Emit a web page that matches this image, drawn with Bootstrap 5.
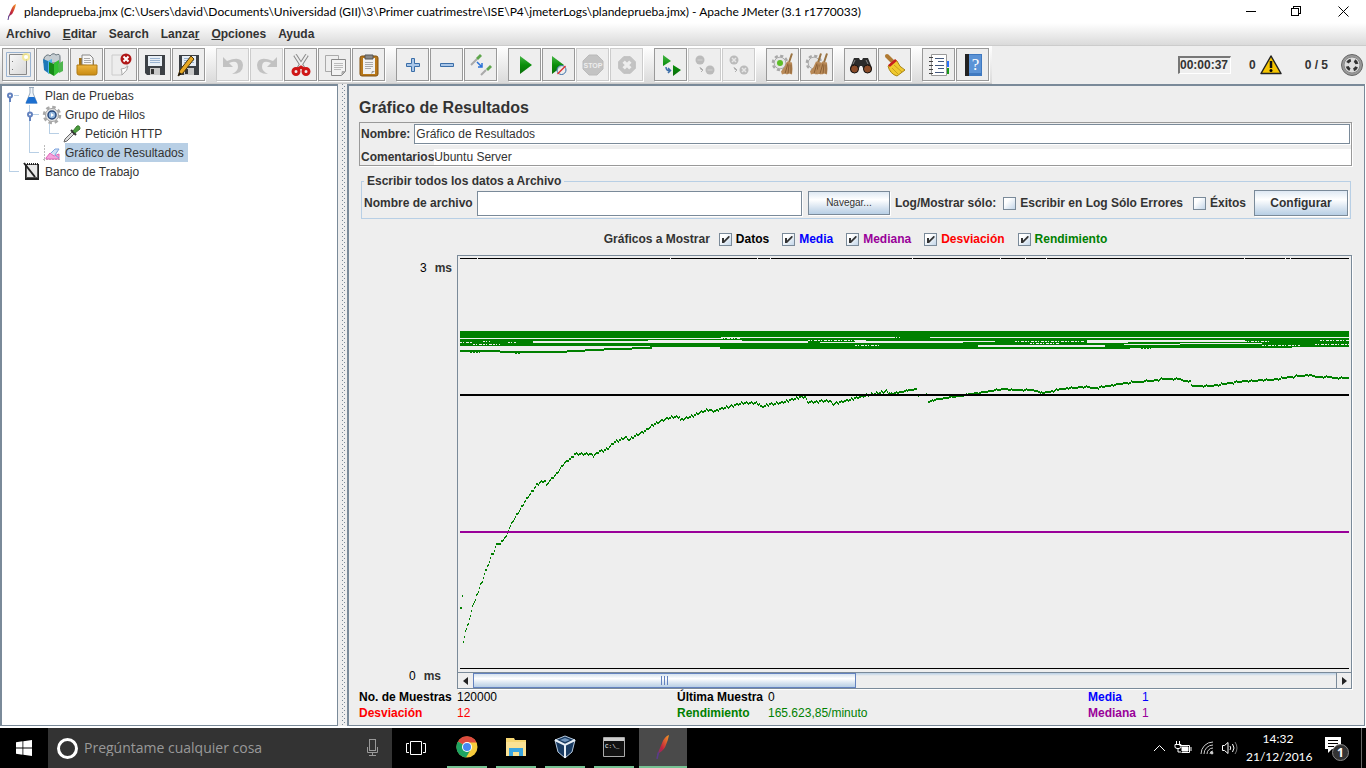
<!DOCTYPE html>
<html lang="es">
<head>
<meta charset="utf-8">
<meta name="viewport" content="width=device-width, initial-scale=1">
<title>plandeprueba.jmx - Apache JMeter (3.1 r1770033)</title>
<link href="https://cdn.jsdelivr.net/npm/bootstrap@5.3.0/dist/css/bootstrap.min.css" rel="stylesheet">
<style>
:root{--steel:#7a8a99;--sky:#b8cfe5;--panel:#eee;--ink:#333}
body{font:12px/16px "Liberation Sans",Arial,sans-serif;color:var(--ink);background:#fff}
button{font:inherit;color:inherit;border:0;background:none;padding:0}
svg{display:block;flex:none}
a{color:inherit;text-decoration:none}
b,label,legend{font-weight:700}
main{padding:0 1px 2px 0}

/* Title bar, menus and toolbar */
.titlebar{height:23px;font-family:Lato,"Noto Sans",sans-serif;font-size:12px;color:#000}
.titlebar button{width:46px;height:23px}
.menus{height:23px;background:linear-gradient(#fff,#dadada);border-bottom:1px solid #ccc;font-weight:700;padding:0 6px;gap:12px}
.toolrow{height:38px;background:var(--panel)}
.toolset{width:992px;height:38px;padding:0 2px;gap:10px;background:linear-gradient(#fff,#dadada);border-bottom:1px solid #ccc}
.tool{width:33px;height:33px;border:1px solid #999;background:var(--panel);margin-right:1px;box-shadow:1px 1px #fff}
.tool:disabled{border-color:#ccc}
.tool:disabled svg{opacity:.75}
.runinfo{padding-right:2px}
.clockbox{width:53px;height:18px;border:1px solid #fff;border-top:2px solid #777;border-left:2px solid #777;line-height:15px;margin-right:18px}
.threads{margin:0 12px 0 23px}

/* Test plan tree */
.treepane{width:338px;background:#fff;border:2px solid var(--steel);border-right:1px solid var(--steel);border-bottom:1px solid var(--steel)}
.grip{width:9px;background:url("data:image/svg+xml,%3Csvg xmlns='http://www.w3.org/2000/svg' width='4' height='4' fill='%237a8a99'%3E%3Cpath d='M0 0h1v1H0zM2 2h1v1H2z'/%3E%3C/svg%3E") 4px 0 repeat-y var(--panel)}
.tree,.tree ul{list-style:none;margin:0;padding:0}
.tree .node{height:19px;gap:3px}
.tree .txt{height:19px;line-height:20px}
.tree .picked{background:var(--sky);padding-right:4px}
.lv0{padding-left:20px}
.lv1{padding-left:40px}
.lv2{padding-left:61px}

/* Result panel */
.workpane{border:2px solid var(--steel);border-right:1px solid var(--steel);border-bottom:1px solid var(--steel);background:var(--panel);padding:0 12px 4px 10px;min-width:0}
.workpane h1{font-size:16px;line-height:20px;font-weight:700;margin:12px 0 4px}
.namebox{border:1px solid #999;box-shadow:1px 1px #fff;padding-top:1px}
.namebox label{padding-left:1px}
.swing-in{border:1px solid var(--steel);background:#fff;border-radius:0;font-size:12px;color:var(--ink);padding:0 1px;box-shadow:1px 1px #fff;min-width:0;outline:0}
.plain-in{border:0;box-shadow:none;padding:0;height:16px}
.nmfield{height:20px;margin:0 1px 0 4px}
.cmrow{margin-top:5px}
.filefs{border:1px solid var(--sky);margin:7px 1px 0 2px;padding:0 2px 1px}
.filefs legend{float:none;width:auto;font-size:12px;line-height:16px;padding:0 3px;margin:0}
.filerow{height:28px}
.fnfield{height:25px;margin:0 6px 0 4px}
.steelbtn{border:1px solid var(--steel);background:linear-gradient(#dfe9f3,#fff 35%,#d2e0ee 75%,var(--sky));box-shadow:1px 1px #fff}
.nav-btn{width:82px;height:24px;font-size:10px}
.logtxt{margin:0 7px 0 5px}
.errtxt{margin-right:10px}
.cfg-btn{width:94px;height:26px;margin-left:8px}
.tick{appearance:none;width:13px;height:13px;margin:0 4px 0 0;border:1px solid var(--steel);background:linear-gradient(135deg,#fff 30%,#c3d6e9);flex:none}
.tick:checked{background:url("data:image/svg+xml,%3Csvg xmlns='http://www.w3.org/2000/svg' viewBox='0 0 11 11'%3E%3Cpath d='M2 4h2v2.5L8.500 2h1v1.500L4 9H2z' fill='%23333'/%3E%3C/svg%3E"),linear-gradient(135deg,#fff 30%,#c3d6e9)}
.showrow{gap:13px;height:16px;margin:12px 0 8px}
.showrow>b{margin-right:-4px}
.axis{width:98px}
.axtop{padding:5px 5px 0 0}
.axbot{padding:0 16px 5px 0}
.plotbox{border:1px solid var(--steel);box-shadow:1px 1px #fff;min-width:0}
.plotarea{padding:2px;border-bottom:1px solid var(--steel)}
.hbar{height:15px;background:linear-gradient(var(--sky),var(--panel) 3px)}
.hbar button{width:15px;background:var(--panel)}
.hbar .hright{border-left:1px solid var(--steel)}
.thumb{width:383px;border:1px solid #6382bf;background:linear-gradient(#d5e2ef,#fff 35%,#d2e0ee 75%,var(--sky))}
.stats{display:grid;grid-template-columns:98px 22fr 91px 32fr 54px 21fr}
.kblack{color:#000}.kblue{color:#00f}.kpurple{color:#909}.kred{color:#f00}.kgreen{color:green}

/* Taskbar */
.tasks{height:40px;background:#000;color:#fff;font-family:"Open Sans","Noto Sans",sans-serif}
.tasks button{height:40px}
.sq{width:48px}
.ask{width:344px;background:#333;padding:0 12px 0 8px}
.ask input{background:none;border:0;outline:0;color:#fff;font-size:14px;padding:0 0 0 5px;min-width:0}
.ask input::placeholder{color:#999;opacity:1}
.apps{padding-left:7px;gap:9px}
.tasks .app{width:40px;border-bottom:2px solid #76c293}
.tasks .now{width:48px;background:#4a4a4a;margin-left:-4px}
.when{width:64px;line-height:18px;font-family:Lato,"Noto Sans",sans-serif}
.note{margin:0 4px 0 5px}
.edge{width:5px;height:40px;border-left:1px solid #666}
</style>
</head>
<body class="d-flex flex-column min-vh-100">
<svg width="0" height="0" class="position-absolute" aria-hidden="true">
<defs>
<linearGradient id="gFeather" x1="0" y1="1" x2="1" y2="0"><stop offset="0" stop-color="#5b3b8c"/><stop offset=".4" stop-color="#c2233c"/><stop offset="1" stop-color="#f69923"/></linearGradient>
<linearGradient id="gGreen" x2="0" y2="1"><stop offset="0" stop-color="#45b545"/><stop offset=".5" stop-color="#0a8f0a"/><stop offset="1" stop-color="#0a6c0a"/></linearGradient>
<linearGradient id="gPaper" x1="0" y1="0" x2="1" y2="1"><stop offset="0" stop-color="#f8f8f8"/><stop offset="1" stop-color="#d8d8d8"/></linearGradient>
<linearGradient id="gGold" x2="0" y2="1"><stop offset="0" stop-color="#efb63e"/><stop offset="1" stop-color="#c88a12"/></linearGradient>
<symbol id="feather" viewBox="0 0 16 16"><path d="M12 0Q9 1 7.500 5L5 11 4 14 5.500 12Q9 10 10 6.500 11.500 3 12 0z" fill="url(#gFeather)"/><path d="M5 11.500 4 16" stroke="#5b3b8c"/></symbol>
<symbol id="gear" viewBox="0 0 20 20"><circle cx="10" cy="10" r="8" fill="none" stroke="#a8a8a8" stroke-width="2.500" stroke-dasharray="3.500 2.780"/><circle cx="10" cy="10" r="6.500" fill="#e6e6e6" stroke="#a0a0a0"/></symbol>
<symbol id="broom" viewBox="0 0 14 22"><path d="M12 0 9 9" stroke="#9a7443" stroke-width="2"/><path d="M7 8l5 1q1 7 0 12l-3-1-2 1-2-1-3 1-1-3q4-4 6-10z" fill="#b98a58"/><path d="M8 10 5 20M9 11 8 20M11 11v9" stroke="#8b6035"/></symbol>
<symbol id="stopsign" viewBox="0 0 24 24"><path d="M8 2h8l6 6v8l-6 6H8l-6-6V8z" fill="#b5b5b5" stroke="#aaa"/></symbol>
<symbol id="dropper" viewBox="0 0 18 18"><path d="M1 17 2 14 9 7l2 2-7 7z" fill="#ddd" stroke="#666"/><path d="M8 5l5 5" stroke="#333" stroke-width="2"/><path d="M10 6 14 1q3-1 3 3l-5 4z" fill="#4a9c3c" stroke="#3c7a33"/></symbol>
<symbol id="floppy" viewBox="0 0 24 24"><path d="M2 2h20v20H4l-2-2z" fill="#3c4045"/><path d="M5 3h14v10H5z" fill="#e7eef5"/><path d="M7 5.500h10M7 7.500h10M7 9.500h10" stroke="#9ab3d0"/><path d="M7 15h10v7H7z" fill="#c9c9c9"/><path d="M8 16h3v5H8z" fill="#333"/></symbol>
</defs>
</svg>

<header>
<div class="titlebar d-flex align-items-center">
  <svg width="16" height="18" viewBox="0 0 16 16" class="mx-1"><use href="#feather"/></svg>
  <span class="flex-grow-1 text-nowrap">plandeprueba.jmx (C:\Users\david\Documents\Universidad (GII)\3\Primer cuatrimestre\ISE\P4\jmeterLogs\plandeprueba.jmx) - Apache JMeter (3.1 r1770033)</span>
  <button aria-label="Minimizar"><svg class="m-auto" width="11" height="11" stroke="#000" shape-rendering="crispEdges"><path d="M0 5.500h10"/></svg></button>
  <button aria-label="Restaurar"><svg class="m-auto" width="12" height="11" stroke="#000" fill="none" shape-rendering="crispEdges"><path d="M.5 2.500h7v7h-7zM2.500 2.500v-2h7v7h-2"/></svg></button>
  <button aria-label="Cerrar"><svg class="m-auto" width="11" height="11" stroke="#000"><path d="M.5.5l10 10M10.500.5l-10 10"/></svg></button>
</div>
<nav class="menus d-flex align-items-center">
  <a href="#">Archivo</a><a href="#"><u>E</u>ditar</a><a href="#">Search</a><a href="#">Lanza<u>r</u></a><a href="#"><u>O</u>pciones</a><a href="#">Ayuda</a>
</nav>
<div class="toolrow d-flex">
 <div class="toolset d-flex align-items-center flex-shrink-0">
  <div class="d-flex">
   <button class="tool d-grid" aria-label="Nuevo"><svg class="m-auto" width="25" height="25" viewBox="0 0 25 25"><path d="M.5.5h24v24H.5z" fill="none" stroke="#9ab3d0"/><path d="M3.500 2.500h17v20h-17z" fill="url(#gPaper)" stroke="#888"/><circle cx="20" cy="5" r="4" fill="#f5e98a" opacity=".8"/><circle cx="20" cy="5" r="2" fill="#fff"/><path d="M6 9.500h1M6 17.500h1" stroke="#777"/></svg></button>
   <button class="tool d-grid" aria-label="Plantillas"><svg class="m-auto" width="24" height="24" viewBox="0 0 24 24"><path d="M3 5q3-5 6-2 3-4 6-1 4-2 4 2v6H3z" fill="#c5cdd2" stroke="#68757e"/><path d="M2 6 7 8V20L3 17z" fill="#1d78b8"/><path d="M7 8 11 6v14l-4 1z" fill="#52b4e6"/><path d="M8 9l5 2v12l-5-3z" fill="#178a17"/><path d="M13 10l5-3v12l-5 4z" fill="#35c035"/><path d="M17 11l5-3v10l-4 2z" fill="#4fb64f"/></svg></button>
   <button class="tool d-grid" aria-label="Abrir"><svg class="m-auto" width="24" height="24" viewBox="0 0 24 24"><path d="M4 10V5h7l1 2h7v7H4z" fill="#a47316"/><path d="M7 12V2h8l3 3v8z" fill="#f7f7f7" stroke="#888"/><path d="M9 5.500h6M9 7.500h7M9 9.500h7" stroke="#aaa"/><path d="M2 12h20v8q0 2-2 2H4q-2 0-2-2z" fill="url(#gGold)" stroke="#b07a12"/></svg></button>
   <button class="tool d-grid" aria-label="Cerrar plan"><svg class="m-auto" width="24" height="24" viewBox="0 0 24 24"><path d="M3 2h15v15l-5 5H3z" fill="#ededed" stroke="#ccc"/><path d="M19 13q0 4-6 9 0-5-1-6 4 0 7-3z" fill="#fff" stroke="#aaa"/><circle cx="17" cy="6" r="5.500" fill="#b01818"/><path d="m14.500 3.500 5 5m0-5-5 5" stroke="#fff" stroke-width="2"/></svg></button>
   <button class="tool d-grid" aria-label="Guardar"><svg class="m-auto" width="24" height="24"><use href="#floppy"/></svg></button>
   <button class="tool d-grid" aria-label="Guardar como"><svg class="m-auto" width="24" height="24" viewBox="0 0 24 24"><use href="#floppy"/><path d="m1 23 2-6L14 3l3 3L6 20z" fill="#e8a823" stroke="#4d360b"/><path d="m1 23 1.500-4 2 2z" fill="#111"/></svg></button>
  </div>
  <div class="d-flex">
   <button class="tool d-grid" disabled aria-label="Deshacer"><svg class="m-auto" width="24" height="24" viewBox="0 0 24 24"><path d="M2 4v10h10L8 10q9-4 9 4 0 4-6 7 11 0 11-9Q21 2 6 8z" fill="#b4b4b4"/></svg></button>
   <button class="tool d-grid" disabled aria-label="Rehacer"><svg class="m-auto" width="24" height="24" viewBox="0 0 24 24"><path d="M22 4v10H12l4-4q-9-4-9 4 0 4 6 7-11 0-11-9Q3 2 18 8z" fill="#b4b4b4"/></svg></button>
   <button class="tool d-grid" aria-label="Cortar"><svg class="m-auto" width="24" height="24" viewBox="0 0 24 24"><path d="M6 2 15 16M18 2 9 16" stroke="#888" stroke-width="4"/><path d="M6 2 15 16M18 2 9 16" stroke="#eee" stroke-width="2"/><g fill="none" stroke="#cf1717" stroke-width="3"><circle cx="7" cy="18.500" r="3"/><circle cx="17" cy="18.500" r="3"/><path d="m9 16 3-2 3 2"/></g></svg></button>
   <button class="tool d-grid" aria-label="Copiar"><svg class="m-auto" width="24" height="24" viewBox="0 0 24 24"><path d="M2.500 2.500h13v16h-13z" fill="#eee" stroke="#aaa"/><path d="M8.500 6.500h14v12l-4 4h-10z" fill="#f3f3f3" stroke="#888"/><path d="M11 10.500h9M11 12.500h9M11 14.500h9M11 16.500h7" stroke="#bbb"/><path d="m18 22 1-4 4 0z" fill="#aaa"/></svg></button>
   <button class="tool d-grid" aria-label="Pegar"><svg class="m-auto" width="24" height="24" viewBox="0 0 24 24"><rect x="3" y="3" width="18" height="20" rx="2" fill="#b87718" stroke="#805010"/><path d="M6 5h12v16H6z" fill="#f1f1f1"/><path d="M8 2h8v4H8z" fill="#888" stroke="#555"/><path d="M8 9.500h8M8 11.500h8M8 13.500h8M8 15.500h6" stroke="#aaa"/><path d="m14 21 1-3 3 0z" fill="#999"/></svg></button>
  </div>
  <div class="d-flex">
   <button class="tool d-grid" aria-label="Expandir"><svg class="m-auto" width="24" height="24" viewBox="0 0 24 24"><path d="M10.500 5.500h3v5h5v3h-5v5h-3v-5h-5v-3h5z" fill="#a9c6e8" stroke="#3b6ea8"/></svg></button>
   <button class="tool d-grid" aria-label="Contraer"><svg class="m-auto" width="24" height="24" viewBox="0 0 24 24"><path d="M5.500 10.500h13v3h-13z" fill="#a9c6e8" stroke="#3b6ea8"/></svg></button>
   <button class="tool d-grid" aria-label="Alternar"><svg class="m-auto" width="24" height="24" viewBox="0 0 24 24"><g stroke="#aaa" stroke-width="2"><path d="m2 12 6-6M12 22l5-5"/></g><path d="m7 5 4-4 2 2-4 4zM17 16l4-4 2 2-4 4z" fill="#5ea64c"/><path d="m8 9 5 5m0-4v4H9" fill="none" stroke="#2a72d8" stroke-width="1.500"/></svg></button>
  </div>
  <div class="d-flex">
   <button class="tool d-grid" aria-label="Arrancar"><svg class="m-auto" width="24" height="24" viewBox="0 0 24 24"><path d="m7 3 12 9-12 9z" fill="url(#gGreen)"/></svg></button>
   <button class="tool d-grid" aria-label="Arrancar sin pausas"><svg class="m-auto" width="24" height="24" viewBox="0 0 24 24"><path d="m5 3 12 9-12 9z" fill="url(#gGreen)"/><circle cx="14.500" cy="17" r="4.500" fill="#eee" fill-opacity=".8" stroke="#3b6ea8"/><path d="m10.500 21 8-8" stroke="#d33" stroke-width="1.500"/></svg></button>
   <button class="tool d-grid" disabled aria-label="Parar"><svg class="m-auto" width="24" height="24" viewBox="0 0 24 24"><use href="#stopsign"/><text x="12" y="15" font-size="7" font-weight="700" text-anchor="middle" fill="#eee">STOP</text></svg></button>
   <button class="tool d-grid" disabled aria-label="Interrumpir"><svg class="m-auto" width="20" height="20" viewBox="0 0 24 24"><use href="#stopsign"/><path d="m8 8 8 8m0-8-8 8" stroke="#eee" stroke-width="4"/></svg></button>
  </div>
  <div class="d-flex">
   <button class="tool d-grid" aria-label="Arrancar remoto"><svg class="m-auto" width="24" height="24" viewBox="0 0 24 24"><path d="m4 2 8 6-8 5zM14 12l8 5-8 6z" fill="url(#gGreen)"/><path d="M7 14q0 4 4 3.500m-2-2.500 2.500 2.500-2.500 2.500" fill="none" stroke="#3b6ea8" stroke-width="1.500"/></svg></button>
   <button class="tool d-grid" disabled aria-label="Parar remoto"><svg class="m-auto" width="24" height="24" viewBox="0 0 24 24" fill="#aaa"><circle cx="7" cy="7" r="4.500"/><circle cx="17" cy="17" r="4.500"/><path d="M7 14q0 3 3 3m-2-2 2 2-2 2" fill="none" stroke="#999"/><path d="M4.500 6.500h5v1h-5zM14.500 16.500h5v1h-5z" fill="#ccc"/></svg></button>
   <button class="tool d-grid" disabled aria-label="Interrumpir remoto"><svg class="m-auto" width="24" height="24" viewBox="0 0 24 24" fill="#aaa"><circle cx="7" cy="7" r="4.500"/><circle cx="17" cy="17" r="4.500"/><path d="M7 14q0 3 3 3m-2-2 2 2-2 2" fill="none" stroke="#999"/><path d="m5 5 4 4m0-4-4 4M15 15l4 4m0-4-4 4" stroke="#e4e4e4" stroke-width="1.500"/></svg></button>
  </div>
  <div class="d-flex">
   <button class="tool d-grid" aria-label="Limpiar"><svg class="m-auto" width="24" height="24" viewBox="0 0 24 24"><use href="#gear" width="18" height="18" y="1"/><circle cx="9" cy="10" r="3" fill="#5ebd28"/><use href="#broom" x="9" width="14" height="23"/></svg></button>
   <button class="tool d-grid" aria-label="Limpiar todo"><svg class="m-auto" width="24" height="24" viewBox="0 0 24 24"><use href="#gear" width="18" height="18" y="1"/><use href="#broom" x="4" width="14" height="23"/><use href="#broom" x="10" width="14" height="23"/></svg></button>
  </div>
  <div class="d-flex">
   <button class="tool d-grid" aria-label="Buscar"><svg class="m-auto" width="24" height="24" viewBox="0 0 24 24"><path d="M5 5h5l1 2h2l1-2h5l4 10-1 4h-6l-3-6h-2l-3 6H2l-1-4z" fill="#2b2b2b"/><circle cx="5.500" cy="16" r="4" fill="#8a4b28" stroke="#111"/><circle cx="18.500" cy="16" r="4" fill="#8a4b28" stroke="#111"/><path d="M6 7 4 11M17 7l2 4" stroke="#888"/></svg></button>
   <button class="tool d-grid" aria-label="Limpiar búsqueda"><svg class="m-auto" width="24" height="24" viewBox="0 0 24 24"><path d="m4 3 5 5" stroke="#b07a32" stroke-width="4" stroke-linecap="round"/><path d="m5 13 7-6 2 1q2 6 8 9l-8 6Q7 21 5 13z" fill="#f0c92e" stroke="#a98412"/><path d="m6 13 7-6" stroke="#c81e1e" stroke-width="2.500"/><path d="m9 15 6 6m-4-9 8 7" stroke="#c9a11c"/></svg></button>
  </div>
  <div class="d-flex">
   <button class="tool d-grid" aria-label="Funciones"><svg class="m-auto" width="24" height="24" viewBox="0 0 24 24"><path d="M4.500 1.500h15v21h-15z" fill="#fff" stroke="#999"/><path d="M20 8h2v6h-2z" fill="#2a72ff"/><path d="M20 15h2v6h-2z" fill="#1a9a1a"/><path d="M2 4.500h4M2 8.500h4M2 12.500h4M2 16.500h4M2 20.500h4" stroke="#444"/><path d="M8 5.500h9M11 8.500h6M8 12.500h9M11 15.500h6M8 19.500h9" stroke="#445a80"/></svg></button>
   <button class="tool d-grid" aria-label="Ayuda"><svg class="m-auto" width="24" height="24" viewBox="0 0 24 24"><path d="M4 1h17v22H4z" fill="#3f79c0"/><path d="M4 1h4v22H4z" fill="#222"/><path d="M8 2h12v18H8z" fill="#5b93d6"/><text x="14.500" y="17" font-size="17" text-anchor="middle" fill="#fff" font-family="Liberation Serif">?</text></svg></button>
  </div>
 </div>
 <div class="runinfo d-flex align-items-center ms-auto fw-bold text-nowrap">
  <span class="clockbox">00:00:37</span><span class="me-1">0</span>
  <svg width="22" height="20" viewBox="0 0 22 20"><path d="M11 1 21 18.500H1z" fill="#f5c400" stroke="#222" stroke-width="1.500" stroke-linejoin="round"/><path d="M11 6v7" stroke="#111" stroke-width="2.500"/><circle cx="11" cy="15.500" r="1.500"/></svg>
  <span class="threads">0 / 5</span>
  <svg width="24" height="24" viewBox="0 0 24 24"><circle cx="12" cy="12" r="10.500" fill="#999" stroke="#666"/><circle cx="12" cy="12" r="8" fill="#ddd" stroke="#888"/><circle cx="12" cy="12" r="5" fill="none" stroke="#333" stroke-width="3" stroke-dasharray="4 3.850" stroke-dashoffset="-2"/></svg>
 </div>
</div>
</header>

<main class="d-flex flex-grow-1">
 <aside class="treepane flex-shrink-0 position-relative">
  <svg class="position-absolute top-0 start-0" width="60" height="100" stroke="#b8cfe5" fill="none" shape-rendering="crispEdges"><path d="M7.500 14v71.500h9M12 9.500h5M27.500 19v9M27.500 33v33.500h9M31 28.500h6M47.500 38v9.500h9"/><g stroke="#6382bf" stroke-width="2" shape-rendering="auto"><circle cx="8" cy="9.500" r="2" fill="#fff"/><path d="M8 12v4"/><circle cx="28" cy="28.500" r="2" fill="#fff"/><path d="M28 31v4"/></g></svg>
  <ul class="tree position-relative">
   <li><div class="node lv0 d-flex align-items-center"><svg width="20" height="19" viewBox="0 0 20 19"><path d="M7 1.500h5M8 2v5L4 17h11l-4-10V2" fill="#eef4fa" stroke="#9ab"/><path d="m6.500 11-3 6.500h12l-3-6.500z" fill="#1c6fd0"/></svg><span class="txt">Plan de Pruebas</span></div>
    <ul>
     <li><div class="node lv1 d-flex align-items-center"><svg width="20" height="20" viewBox="0 0 20 20"><use href="#gear"/><circle cx="10" cy="10" r="4" fill="#8fb4dd" stroke="#25467a" stroke-width="1.500"/><path d="m9 8 3 2-3 2z" fill="#fff"/></svg><span class="txt">Grupo de Hilos</span></div>
      <ul><li><div class="node lv2 d-flex align-items-center"><svg width="19" height="18"><use href="#dropper" width="18" height="18"/></svg><span class="txt">Petición HTTP</span></div></li></ul>
     </li>
     <li><div class="node lv1 d-flex align-items-center"><svg width="20" height="18" viewBox="0 0 20 18"><path d="M2.500 1v16M1 15.500h17" stroke="#bbb" stroke-dasharray="2 1"/><path d="m4 14 4-5 4 3 5-2v5H4z" fill="#f5a3dc" stroke="#df63b8"/><path d="m9 9 4-4h4l-4 6 4 3" fill="#cfe0f5" stroke="#7ea3dd"/></svg><span class="txt picked">Gráfico de Resultados</span></div></li>
    </ul>
   </li>
   <li><div class="node lv0 d-flex align-items-center"><svg width="20" height="19" viewBox="0 0 20 19"><path d="M3 2h14v16H3z" fill="#222"/><path d="M4.500 2.500h11v13h-11z" fill="#e9e9e9" stroke="#555"/><path d="m2 1 11 14" stroke="#222" stroke-width="2"/><path d="M5 2h11" stroke="#222" stroke-width="2" stroke-dasharray="1 1"/></svg><span class="txt">Banco de Trabajo</span></div></li>
  </ul>
 </aside>
 <div class="grip flex-shrink-0"></div>
 <section class="workpane flex-grow-1 d-flex flex-column">
  <h1>Gráfico de Resultados</h1>
  <div class="namebox">
   <div class="d-flex align-items-center"><label for="nm">Nombre:</label><input id="nm" class="swing-in flex-grow-1 nmfield" value="Gráfico de Resultados"></div>
   <div class="d-flex align-items-center cmrow"><label for="cm">Comentarios</label><input id="cm" class="swing-in plain-in flex-grow-1" value="Ubuntu Server"></div>
  </div>
  <fieldset class="filefs"><legend>Escribir todos los datos a Archivo</legend>
   <div class="d-flex align-items-center text-nowrap filerow">
    <label for="fn">Nombre de archivo</label><input id="fn" class="swing-in flex-grow-1 fnfield">
    <button class="steelbtn nav-btn">Navegar...</button><b class="logtxt">Log/Mostrar sólo:</b>
    <input type="checkbox" class="tick" id="e1"><label for="e1" class="errtxt">Escribir en Log Sólo Errores</label>
    <input type="checkbox" class="tick" id="e2"><label for="e2">Éxitos</label>
    <button class="steelbtn cfg-btn fw-bold">Configurar</button>
   </div>
  </fieldset>
  <div class="d-flex align-items-center justify-content-center showrow text-nowrap">
   <b>Gráficos a Mostrar</b>
   <span class="d-flex align-items-center"><input type="checkbox" class="tick" id="s1" checked><label for="s1" class="kblack">Datos</label></span>
   <span class="d-flex align-items-center"><input type="checkbox" class="tick" id="s2" checked><label for="s2" class="kblue">Media</label></span>
   <span class="d-flex align-items-center"><input type="checkbox" class="tick" id="s3" checked><label for="s3" class="kpurple">Mediana</label></span>
   <span class="d-flex align-items-center"><input type="checkbox" class="tick" id="s4" checked><label for="s4" class="kred">Desviación</label></span>
   <span class="d-flex align-items-center"><input type="checkbox" class="tick" id="s5" checked><label for="s5" class="kgreen">Rendimiento</label></span>
  </div>
  <div class="d-flex flex-grow-1">
   <div class="axis flex-shrink-0 d-flex flex-column justify-content-between text-end">
    <div class="axtop"><span class="kblack me-2">3</span><b>ms</b></div>
    <div class="axbot"><span class="kblack me-2">0</span><b>ms</b></div>
   </div>
   <div class="plotbox flex-grow-1 d-flex flex-column">
    <div class="plotarea flex-grow-1">
     <svg width="100%" height="411" viewBox="460 258 889 411" preserveAspectRatio="none" shape-rendering="crispEdges" role="img" aria-label="Gráfico de rendimiento">
      <path d="M460 258.500h889M460 668.500h889" stroke="#000"/>
      <path d="M477 258.500h1M670 258.500h1M757 258.500h1M770 258.500h1M912 258.500h1M1000 258.500h1M1025 258.500h1M1046 258.500h1M1244 258.500h1M1285 258.500h1M1290 258.500h1" stroke="#eee"/>
      <path d="M460 331H1349V347H1292V348H1130V349H720V347H650V346H460z" fill="green"/>
      <path d="M460 351h40M500 352h67M567 351h18M585 350h19M604 349h28M632 348h20" stroke="green" stroke-width="2"/>
      <path d="M470 352.500h10M515 353.500h5M965 348.500h10M1002 348.500h6M1034 348.500h6M1106 348.500h18M1141 348.500h10" stroke="green" stroke-dasharray="2 1"/>
      <g id="gaps"></g>
      <path id="flow" fill="green"/>
      <path d="M460 395h889" stroke="#000" stroke-width="2"/>
      <path d="M460 532h889" stroke="#909" stroke-width="2"/>
     </svg>
    </div>
    <div class="hbar d-flex justify-content-between">
     <div class="d-flex"><button aria-label="Izquierda"><svg class="m-auto" width="5" height="8"><path d="M5 0v8L0 4z" fill="#222"/></svg></button><div class="thumb d-flex align-items-center justify-content-center"><svg width="7" height="9" stroke="#6382bf" shape-rendering="crispEdges"><path d="M.5 0v9M3.500 0v9M6.500 0v9"/></svg></div></div>
     <button class="hright" aria-label="Derecha"><svg class="m-auto" width="5" height="8"><path d="M0 0v8l5-4z" fill="#222"/></svg></button>
    </div>
   </div>
  </div>
  <div class="stats">
   <b class="kblack">No. de Muestras</b><span class="kblack">120000</span><b class="kblack">Última Muestra</b><span class="kblack">0</span><b class="kblue">Media</b><span class="kblue">1</span>
   <b class="kred">Desviación</b><span class="kred">12</span><b class="kgreen">Rendimiento</b><span class="kgreen">165.623,85/minuto</span><b class="kpurple">Mediana</b><span class="kpurple">1</span>
  </div>
 </section>
</main>

<footer class="tasks d-flex align-items-stretch">
 <button class="sq" aria-label="Inicio"><svg class="m-auto" width="16" height="16" fill="#fff"><path d="M0 2.200 6.500 1.300V7.600H0zM7.300 1.200 16 0v7.600H7.300zM0 8.400h6.500v6.300L0 13.800zM7.300 8.400H16V16l-8.700-1.200z"/></svg></button>
 <div class="ask d-flex align-items-center"><svg width="23" height="23"><circle cx="11.500" cy="11.500" r="9" fill="none" stroke="#fff" stroke-width="3"/></svg><input class="flex-grow-1" aria-label="Buscar" placeholder="Pregúntame cualquier cosa"><svg width="15" height="18" fill="none" stroke="#999"><rect x="4.500" y=".5" width="6" height="11"/><path d="M2.500 8v5.500h10V8M7.500 14v3M4 16.500h7"/></svg></div>
 <button class="sq" aria-label="Vista de tareas"><svg class="m-auto" width="20" height="14" fill="none" stroke="#fff"><path d="M4.500.5h11v13h-11zM3 2.500H.5v9H3M17 2.500h2.500v9H17"/></svg></button>
 <div class="apps d-flex">
 <button class="app" aria-label="Chrome"><svg class="m-auto" width="22" height="22" viewBox="0 0 22 22"><circle cx="11" cy="11" r="10.500" fill="#f7cb3c"/><path d="M11 11 1.900 5.500A10.500 10.500 0 0 1 20.500 6.500H11z" fill="#dd4b3e"/><path d="M11 11 1.900 5.500A10.500 10.500 0 0 0 10 21.500L15 13z" fill="#1da362"/><circle cx="11" cy="11" r="5" fill="#fff"/><circle cx="11" cy="11" r="4" fill="#4688f1"/></svg></button>
 <button class="app" aria-label="Explorador"><svg class="m-auto" width="22" height="20" viewBox="0 0 22 20"><path d="M1 1h8l1 2h11v16H1z" fill="#f7d774"/><path d="M1 5h20v14H1z" fill="#fbe294"/><path d="M4 19v-8h14v8h-4v-4H8v4z" fill="#3aa5e0"/></svg></button>
 <button class="app" aria-label="VirtualBox"><svg class="m-auto" width="22" height="24" viewBox="0 0 22 24"><path d="M11 1 21 5 18 17 11 23 4 17 1 5z" fill="#183a61" stroke="#b8cbe0"/><path d="M1 5l10 5 10-5M11 10v13" stroke="#e6eef6" stroke-width="2" fill="none"/><path d="m6 5 5-2 5 2-5 2z" fill="#6f93bb"/></svg></button>
 <button class="app" aria-label="Símbolo del sistema"><svg class="m-auto" width="22" height="20" viewBox="0 0 22 20"><path d="M.5.5h21v19H.5z" fill="#111" stroke="#aaa"/><path d="M1 1h20v3H1z" fill="#ccc"/><text x="2" y="11" font-size="6" fill="#fff" font-family="Liberation Mono">C:\_</text></svg></button>
 <button class="app now" aria-label="JMeter"><svg class="m-auto" width="24" height="26" viewBox="0 0 16 16"><use href="#feather"/></svg></button>
 </div>
 <div class="d-flex align-items-center ms-auto gap-2">
  <svg width="13" height="8" fill="none" stroke="#fff"><path d="m1 7 5.500-5.500L12 7"/></svg>
  <svg width="18" height="14" fill="none" stroke="#fff"><path d="M5.500 4.500h10v7h-8M17 6v4M2.500 0v3M5.500 0v3M1 3.500h6v3l-2 1H3l-2-1zM4 8v3h3"/><path d="M8 6h6v4H8z" fill="#fff"/></svg>
  <svg width="14" height="14" fill="none" stroke="#ccc"><path d="M1 13A12 12 0 0 1 13 1M4 13a9 9 0 0 1 9-9M7 13a6 6 0 0 1 6-6M10 13a3 3 0 0 1 3-3"/><circle cx="12" cy="12" r="1" fill="#fff"/></svg>
  <svg width="16" height="14" viewBox="0 0 16 14" fill="none" stroke="#fff"><path d="M.5 4.500h2L6 1.500v11L2.500 9.500h-2zM8 5q1.500 2 0 4M10.500 3q3 4 0 8"/><path d="M13 1q4 6 0 12" stroke="#777"/></svg>
  <div class="when text-center">14:32<br>21/12/2016</div>
  <button aria-label="Notificaciones" class="note"><svg width="26" height="26"><path d="M2 2h16v12H9l-4 4v-4H2z" fill="#fff"/><path d="M5 5.500h10M5 8.500h10M5 11.500h6" stroke="#000"/><circle cx="17.500" cy="17.500" r="8" fill="#333" stroke="#888"/><text x="17.500" y="22" font-size="12" font-weight="700" text-anchor="middle" fill="#fff">1</text></svg></button>
  <span class="edge"></span>
 </div>
</footer>
<script src="https://cdn.jsdelivr.net/npm/bootstrap@5.3.0/dist/js/bootstrap.bundle.min.js"></script>
<script>
// Light gaps inside the dense throughput band: x from, x to, y, height
const gaps=[[460,721,338,1],[721,893,337,1],[930,1349,337,1],[533,648,341,2],[648,742,340,3],[742,808,341,2],[820,855,342,1],[855,866,340,3],[866,963,341,2],[963,995,341,1],[978,1105,345,2],[1087,1128,340,3],[1128,1245,340,2],[1124,1180,344,1],[1180,1262,343,1],[473,533,346,1],[640,700,342,1]];
const dots=[[460,473,342],[483,490,341],[508,516,342],[473,500,344],[721,740,338],[745,775,341],[808,855,340],[855,880,345],[893,900,337],[1015,1085,341],[1030,1060,343],[1262,1300,345],[1315,1349,344],[1320,1349,340],[1245,1270,341]];
let g='';
for(const [a,b,y,h] of gaps) g+=`<path d="M${a} ${y}H${b}v${h}H${a}z" fill="#eee"/>`;
for(const [a,b,y] of dots) g+=`<path d="M${a} ${y+.5}H${b}" stroke="#eee" stroke-dasharray="2 1 1 2 3 1"/>`;
document.getElementById('gaps').innerHTML=g;
// Throughput samples; each run is drawn one mark per column
const runs=[[460,607,461,607],[462,595],[463,641,464,636,465,630,466,628,467,624,468,623,469,618,470,615,471,610,472,605,474,601,475,599,476,594,478,591,480,583,482,581,484,573,485,569,486,569,487,565,488,564,490,557,491,553,493,553,494,550,495,546,496,543,500,543,501,540,502,540,504,537,506,535,508,529,512,521,516,514,520,508,524,501,528,495,532,490,536,484,540,481,545,480,546,485,548,481,552,477,556,473,560,467,564,462,568,459,572,456,574,453,590,453,593,455,599,450,602,450,608,447,614,441,620,439,625,436,629,439,634,435,640,432,646,429,652,424,660,420,668,417,673,416,679,416,680,419,686,417,692,415,698,412,707,409,715,410,720,408,735,404,742,402,754,402,759,403,761,406,770,403,780,402,790,399,800,396,805,396,807,401,830,400,832,403,845,400,855,397,868,394,878,392,886,390,890,393,900,391,910,389,916,388],[918,394],[926,393],[928,401,932,399,940,398,950,396,960,395,970,393,985,391,995,389,1005,388,1012,389,1030,389,1038,390,1040,392,1048,391,1060,388,1070,387,1085,386,1095,387,1108,385,1125,382,1135,381,1150,380,1162,378,1180,378,1184,380,1190,380],[1191,385,1210,385,1230,382,1245,380,1270,379,1290,376,1309,374,1316,376,1348,377]];
let d='';
for(const r of runs) for(let i=0;i<r.length;i+=2){
  const x0=r[i],y0=r[i+1],x1=i+2<r.length?r[i+2]:x0+1,y1=i+3<r.length?r[i+3]:y0;
  for(let x=x0;x<x1;x++){
    const wob=x>506?[0,-1,0,1,0][x%5]*(x<900?1:x%3?0:1):0;
    d+=`M${x} ${Math.round(y0+(y1-y0)*(x-x0)/(x1-x0))+wob}h1v2h-1z`;
  }
}
document.getElementById('flow').setAttribute('d',d);
</script>
</body>
</html>
